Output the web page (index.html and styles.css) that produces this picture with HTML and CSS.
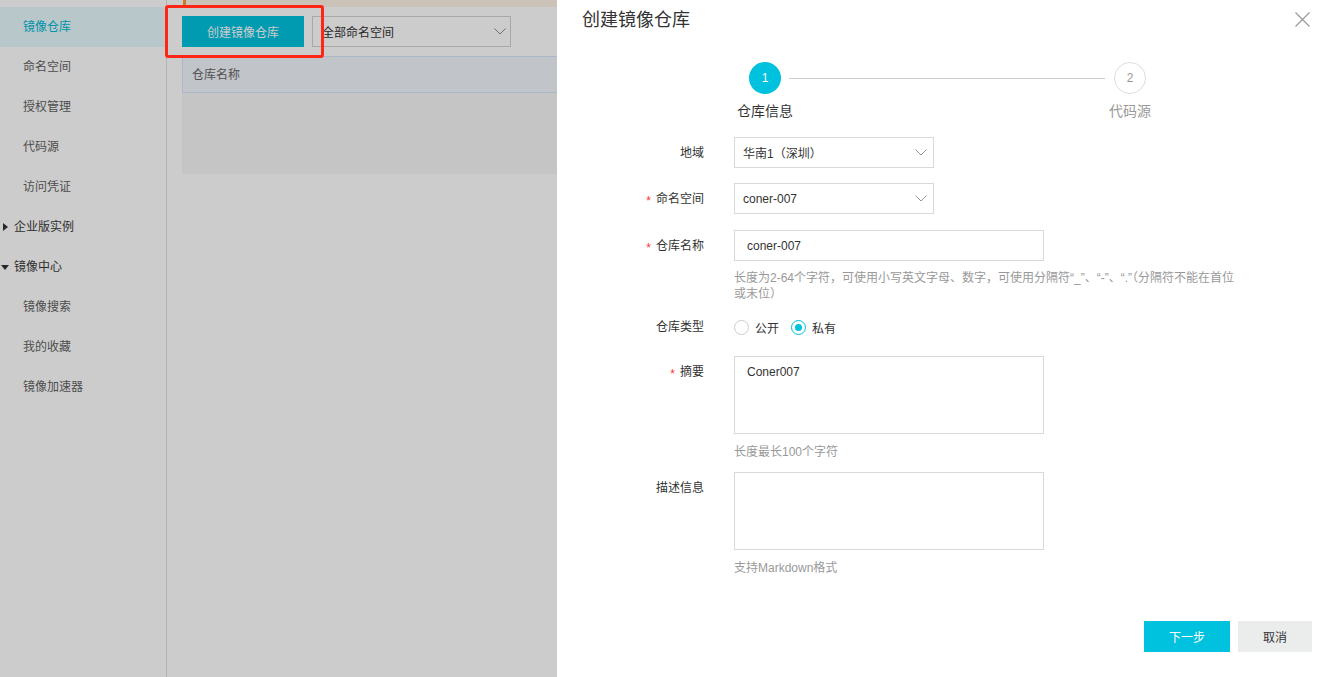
FILE: index.html
```html
<!DOCTYPE html>
<html lang="zh-CN">
<head>
<meta charset="utf-8">
<title>创建镜像仓库</title>
<link rel="stylesheet" href="styles.css">
</head>
<body>
<div class="page">
  <aside class="sidebar">
    <ul class="nav">
      <li class="nav-item active">镜像仓库</li>
      <li class="nav-item">命名空间</li>
      <li class="nav-item">授权管理</li>
      <li class="nav-item">代码源</li>
      <li class="nav-item">访问凭证</li>
      <li class="nav-group"><span class="caret caret-right"></span>企业版实例</li>
      <li class="nav-group"><span class="caret caret-down"></span>镜像中心</li>
      <li class="nav-item">镜像搜索</li>
      <li class="nav-item">我的收藏</li>
      <li class="nav-item">镜像加速器</li>
    </ul>
  </aside>
  <main class="main">
    <div class="notice"></div>
    <div class="toolbar">
      <button class="btn-create">创建镜像仓库</button>
      <div class="select select-ns">
        <span>全部命名空间</span>
        <svg class="chevron" width="12" height="7" viewBox="0 0 12 7"><polyline points="0.5,0.5 6,6 11.5,0.5" fill="none" stroke="#8a8a8a" stroke-width="1"/></svg>
      </div>
    </div>
    <div class="table">
      <div class="table-head">仓库名称</div>
      <div class="table-body"></div>
    </div>
  </main>
</div>

<div class="mask"></div>
<div class="highlight"></div>

<section class="drawer">
  <header class="drawer-header">
    <h2 class="drawer-title">创建镜像仓库</h2>
    <svg class="close" width="15" height="15" viewBox="0 0 15 15"><path d="M0.5 0.5 L14.5 14.5 M14.5 0.5 L0.5 14.5" stroke="#999" stroke-width="1.2" fill="none"/></svg>
  </header>

  <div class="steps">
    <div class="step-dot current">1</div>
    <div class="step-line"></div>
    <div class="step-dot todo">2</div>
    <div class="step-label first">仓库信息</div>
    <div class="step-label last todo">代码源</div>
  </div>

  <div class="form">
    <div class="form-item row-region">
      <div class="form-label">地域</div>
      <div class="select select-form">
        <span>华南1（深圳）</span>
        <svg class="chevron" width="12" height="7" viewBox="0 0 12 7"><polyline points="0.5,0.5 6,6 11.5,0.5" fill="none" stroke="#999" stroke-width="1"/></svg>
      </div>
    </div>
    <div class="form-item row-ns">
      <div class="form-label"><span class="req">*</span>命名空间</div>
      <div class="select select-form">
        <span>coner-007</span>
        <svg class="chevron" width="12" height="7" viewBox="0 0 12 7"><polyline points="0.5,0.5 6,6 11.5,0.5" fill="none" stroke="#999" stroke-width="1"/></svg>
      </div>
    </div>
    <div class="form-item row-name">
      <div class="form-label"><span class="req">*</span>仓库名称</div>
      <div class="control">
        <input class="input" type="text" value="coner-007">
        <div class="help help-wide">长度为2-64个字符，可使用小写英文字母、数字，可使用分隔符“_”、“-”、“.”（分隔符不能在首位或末位）</div>
      </div>
    </div>
    <div class="form-item row-type">
      <div class="form-label short">仓库类型</div>
      <div class="radios">
        <span class="radio"><span class="radio-circle"></span>公开</span>
        <span class="radio checked"><span class="radio-circle"><span class="radio-dot"></span></span>私有</span>
      </div>
    </div>
    <div class="form-item row-summary">
      <div class="form-label"><span class="req">*</span>摘要</div>
      <div class="control">
        <textarea class="textarea">Coner007</textarea>
        <div class="help help-area">长度最长100个字符</div>
      </div>
    </div>
    <div class="form-item row-desc">
      <div class="form-label">描述信息</div>
      <div class="control">
        <textarea class="textarea"></textarea>
        <div class="help help-area">支持Markdown格式</div>
      </div>
    </div>
  </div>

  <footer class="drawer-footer">
    <button class="btn btn-next">下一步</button>
    <button class="btn btn-cancel">取消</button>
  </footer>
</section>
</body>
</html>
```
FILE: styles.css
```css
* { box-sizing: border-box; }
html, body { margin: 0; padding: 0; height: 100%; }
body {
  font-family: "Liberation Sans", "Noto Sans CJK SC", sans-serif;
  font-size: 12px;
  color: #333;
  background: #fff;
  overflow: hidden;
}

/* background page */
.page { display: flex; height: 100vh; }
.sidebar {
  width: 167px;
  flex: none;
  background: #fff;
  border-right: 1px solid #e2e2e2;
  padding-top: 7px;
}
.nav { list-style: none; margin: 0; padding: 0; }
.nav-item { height: 40px; line-height: 41px; padding-left: 23px; color: #5f5f5f; }
.nav-item.active { background: #e6f9fd; color: #00b8d4; }
.nav-group { height: 40px; line-height: 40px; display: flex; padding-left: 3px; color: #3a3a3a; }
.caret { width: 0; height: 0; flex: none; align-self: center; }
.caret-right {
  border-top: 4px solid transparent;
  border-bottom: 4px solid transparent;
  border-left: 5px solid #333;
  margin-right: 6px;
}
.caret-down {
  border-left: 4px solid transparent;
  border-right: 4px solid transparent;
  border-top: 5px solid #333;
  margin-left: -2px;
  margin-right: 5px;
}

.main { flex: 1; min-width: 0; padding: 0 15px; }
.notice { height: 7px; margin-left: 1px; background: #fff4e6; border-left: 3px solid #fb9a35; }
.toolbar { display: flex; gap: 8px; margin-top: 9px; }
.btn-create {
  width: 122px; height: 31px; border: 0; padding: 0;
  background: #00c1de; color: #fff; font: inherit;
}
.select {
  height: 31px;
  border: 1px solid #d9d9d9;
  display: flex; align-items: center; justify-content: space-between;
  background: #fff;
  color: #333;
}
.select-ns { width: 199px; padding: 0 4px 0 9px; border-color: #d3d3d3; }
.chevron { display: block; flex: none; }

.table { margin-top: 9px; }
.table-head {
  height: 37px; line-height: 36px; padding-left: 9px;
  background: #f2f5fc; border: 1px solid #d8e5fa; color: #666;
}
.table-body { height: 81px; background: #f7f7f7; }

/* overlay */
.mask { position: fixed; inset: 0; background: rgba(0, 0, 0, 0.2); }
.highlight {
  position: absolute; left: 165px; top: 5px; width: 159px; height: 53px;
  border: 3px solid #ff2616; border-radius: 3px;
}

/* drawer */
.drawer {
  position: fixed; top: 0; right: 0; bottom: 0; width: 776px;
  background: #fff; display: flex; flex-direction: column;
}
.drawer-header { height: 40px; padding-left: 25px; display: flex; align-items: center; position: relative; }
.drawer-title { margin: 0; font-size: 18px; font-weight: normal; line-height: 40px; color: #333; }
.close { position: absolute; top: 12px; right: 23px; }

.steps {
  margin: 22px 0 0 192px;
  width: 397px;
  display: grid;
  grid-template-columns: 32px 1fr 32px;
  row-gap: 7px;
}
.step-dot {
  width: 32px; height: 32px; border-radius: 50%;
  display: flex; align-items: center; justify-content: center;
  font-size: 12px;
}
.step-dot.current { background: #00c1de; color: #fff; }
.step-dot.todo { border: 1px solid #ddd; color: #999; }
.step-line { height: 1px; background: #ccc; margin: 0 9px 0 8px; align-self: center; }
.step-label {
  display: flex; justify-content: center; white-space: nowrap;
  font-size: 14px; line-height: 20px; color: #333;
}
.step-label.first { grid-column: 1; }
.step-label.last { grid-column: 3; }
.step-label.todo { color: #999; }

.form { margin-top: 16px; }
.form-item { display: flex; }
.form-label {
  width: 147px; flex: none; margin-right: 30px;
  height: 31px;
  text-align: right; line-height: 32px; color: #333;
}
.form-label.short { height: 20px; line-height: 20px; }
.req { color: #f33; display: inline-block; line-height: 12px; vertical-align: -2px; margin-right: 5px; }

.row-region { margin-bottom: 15px; }
.row-ns { margin-bottom: 16px; }
.row-name { margin-bottom: 15px; }
.row-type { margin-bottom: 19px; }
.row-summary { margin-bottom: 12px; }

.select-form { width: 200px; padding: 0 6px 0 8px; }
.input {
  display: block; width: 310px; height: 31px; margin: 0;
  border: 1px solid #d9d9d9; padding: 0 12px;
  font: inherit; color: #333; outline: none;
}
.textarea {
  display: block; width: 310px; height: 78px; margin: 0;
  border: 1px solid #d9d9d9; padding: 6px 12px;
  font: inherit; line-height: 18px; color: #333; resize: none; outline: none;
}
.help { color: #999; line-height: 16px; }
.help-wide { width: 503px; margin-top: 9px; }
.help-area { margin-top: 10px; }

.radios { display: flex; align-items: center; height: 20px; color: #333; }
.radio { display: flex; align-items: center; margin-right: 12px; }
.radio-circle {
  width: 15px; height: 15px; border-radius: 50%;
  border: 1px solid #ccc; margin-right: 6px;
  display: flex; align-items: center; justify-content: center;
}
.radio.checked .radio-circle { border-color: #00c1de; }
.radio-dot { width: 7px; height: 7px; border-radius: 50%; background: #00c1de; }

.drawer-footer {
  margin-top: auto;
  display: flex; justify-content: flex-end; gap: 8px;
  padding: 0 21px 25px 0;
}
.btn { height: 31px; border: 0; padding: 0; font: inherit; }
.btn-next { width: 86px; background: #00c1de; color: #fff; }
.btn-cancel { width: 74px; background: #ebecec; color: #333; }
```
